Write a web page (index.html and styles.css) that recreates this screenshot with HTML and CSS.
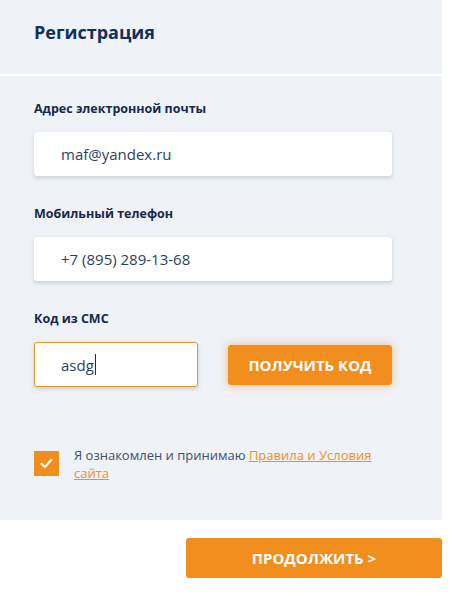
FILE: index.html
```html
<!DOCTYPE html>
<html lang="ru">
<head>
  <meta charset="UTF-8">
  <meta name="viewport" content="width=device-width, initial-scale=1.0">
  <title>Регистрация</title>
  <link rel="stylesheet" href="styles.css">
</head>
<body>
  <div class="panel">
    <div class="panel-head">
      <h2>Регистрация</h2>
    </div>
    <form class="panel-body" id="registrationForm">
      <div class="field">
        <label for="email">Адрес электронной почты</label>
        <input type="email" id="email" class="input" value="maf@yandex.ru">
      </div>

      <div class="field">
        <label for="phone">Мобильный телефон</label>
        <input type="tel" id="phone" class="input" value="+7 (895) 289-13-68">
      </div>

      <div class="field">
        <label for="code">Код из СМС</label>
        <div class="code-row">
          <div class="input input-code" id="code">asdg<span class="caret"></span></div>
          <button type="button" class="btn btn-code">Получить код</button>
        </div>
      </div>

      <div class="agree">
        <span class="checkbox">
          <svg width="13" height="11" viewBox="0 0 13 11"><path d="M1.5 5.8 L4.8 9 L11.5 1.8" fill="none" stroke="#fff" stroke-width="2.2" stroke-linecap="round" stroke-linejoin="round"/></svg>
        </span>
        <p>Я ознакомлен и принимаю <a href="#">Правила и Условия сайта</a></p>
      </div>
    </form>
  </div>

  <div class="actions">
    <button type="submit" class="btn btn-next" form="registrationForm">Продолжить &gt;</button>
  </div>
</body>
</html>
```

FILE: styles.css
```css
/* Reset and global styles */
* {
  margin: 0;
  padding: 0;
  box-sizing: border-box;
}
body {
  font-family: 'Open Sans', 'Noto Sans', sans-serif;
  background: #fff;
  color: #1b2d52;
  width: 456px;
}
.panel {
  width: 442px;
  background: #eff2f7;
}
.panel-head {
  height: 76px;
  padding: 19px 34px 0;
  border-bottom: 2px solid #fff;
}
h2 {
  font-size: 18px;
  line-height: 26px;
  font-weight: 700;
  color: #112f5c;
}
.panel-body {
  padding: 25px 50px 38px 34px;
}
.field {
  margin-bottom: 30px;
}
label {
  display: block;
  font-size: 12.5px;
  line-height: 16px;
  font-weight: 700;
  color: #15294d;
  margin-bottom: 15px;
}
.input {
  display: block;
  width: 100%;
  height: 44px;
  padding: 0 26px;
  border: 1px solid #fff;
  border-radius: 3px;
  background: #fff;
  font-family: inherit;
  font-size: 15px;
  color: #2c3f62;
  box-shadow: 0 2px 4px rgba(30, 50, 90, 0.18);
  outline: none;
}
.code-row {
  display: flex;
  align-items: center;
  gap: 30px;
}
.input-code {
  width: 164px;
  height: 45px;
  flex: none;
  display: flex;
  align-items: center;
  border-color: #f0922a;
}
.caret {
  display: inline-block;
  width: 1px;
  height: 21px;
  margin-left: 1px;
  background: #112f5c;
}
.btn {
  border: none;
  border-radius: 3px;
  background: #f28e1e;
  color: #fff;
  font-family: inherit;
  font-weight: 700;
  font-size: 15px;
  text-transform: uppercase;
  cursor: pointer;
}
.btn-code {
  width: 164px;
  height: 40px;
  box-shadow: 0 0 8px rgba(242, 142, 30, 0.55);
}
.agree {
  display: flex;
  align-items: flex-start;
  gap: 15px;
  margin-top: 64px;
}
.checkbox {
  width: 25px;
  height: 25px;
  flex: none;
  background: #f28e1e;
  display: flex;
  align-items: center;
  justify-content: center;
}
.agree p {
  margin-top: -5px;
  font-size: 13px;
  line-height: 18px;
  color: #3b4f72;
  padding-right: 14px;
}
.agree a {
  color: #f28e1e;
}
.actions {
  width: 442px;
  display: flex;
  justify-content: flex-end;
  padding-top: 18px;
}
.btn-next {
  width: 256px;
  height: 40px;
}
```
